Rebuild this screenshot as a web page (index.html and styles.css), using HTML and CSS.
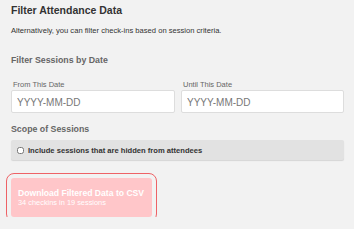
FILE: index.html
```html
<!DOCTYPE html>
<html lang="en">
<head>
<meta charset="UTF-8">
<title>Filter Attendance Data</title>
<link rel="stylesheet" href="styles.css">
</head>
<body>
    <div class="panel">
        <h2 class="title">Filter Attendance Data</h2>
        <p class="lead">Alternatively, you can filter check-ins based on session criteria.</p>

        <!-- date range -->
        <h3 class="section">Filter Sessions by Date</h3>
        <div class="dates">
            <label class="field">
                <span class="field-label">From This Date</span>
                <input class="date-input" type="text" placeholder="YYYY-MM-DD">
            </label>
            <label class="field">
                <span class="field-label">Until This Date</span>
                <input class="date-input" type="text" placeholder="YYYY-MM-DD">
            </label>
        </div>

        <!-- scope -->
        <h3 class="section scope-title">Scope of Sessions</h3>
        <label class="scope">
            <input class="scope-check" type="checkbox">
            <span>Include sessions that are hidden from attendees</span>
        </label>

        <button class="download" disabled>
            <span class="btn-title">Download Filtered Data to CSV</span>
            <span class="btn-sub">34 checkins in 19 sessions</span>
        </button>
    </div>
</body>
</html>
```

FILE: styles.css
```css
body {
    margin: 0;
    background: #f2f2f2;
    font-family: "Liberation Sans", Arial, sans-serif;
    color: #333;
}
.panel {
    padding: 4px 10px 0 11px;
}
.title {
    margin: 0;
    font-size: 10.5px;
    line-height: 12px;
    font-weight: bold;
    color: #333;
}
.lead {
    margin: 9.5px 0 0;
    font-size: 7.6px;
    line-height: 9px;
    color: #333;
}
.section {
    margin: 20px 0 0;
    font-size: 8.8px;
    line-height: 10px;
    font-weight: bold;
    color: #666;
}
.dates {
    display: grid;
    grid-template-columns: 164px 163px;
    gap: 6px;
    margin-top: 15px;
}
.field {
    display: flex;
    flex-direction: column;
}
.field-label {
    padding-left: 2px;
    font-size: 7.5px;
    line-height: 9px;
    color: #666;
}
.date-input {
    box-sizing: border-box;
    height: 23px;
    margin-top: 1.6px;
    padding: 1px 5px 0;
    border: 1px solid #ddd;
    border-radius: 2px;
    background: #fff;
    font-family: inherit;
    font-size: 10px;
    color: #333;
}
.date-input::placeholder {
    color: #777;
}
.scope-title {
    margin-top: 10.5px;
}
.scope {
    display: flex;
    align-items: center;
    gap: 4px;
    box-sizing: border-box;
    height: 20px;
    margin-top: 6.5px;
    padding-left: 6px;
    background: #e2e2e2;
    border-radius: 2px;
    box-shadow: 0 1px 1px rgba(0,0,0,0.12);
    font-size: 7.6px;
    font-weight: bold;
    color: #333;
}
.scope-check {
    width: 7px;
    height: 7px;
    margin: 0;
}
.download {
    display: flex;
    flex-direction: column;
    align-items: flex-start;
    width: 141px;
    margin-top: 18px;
    padding: 9.5px 7px 10px;
    border: none;
    border-radius: 3px;
    background: #ffc6c9;
    color: #fff;
    font-family: inherit;
    text-align: left;
    outline: 1.5px solid #ee6266;
    outline-offset: 4.5px;
}
.btn-title {
    font-size: 8.6px;
    line-height: 10px;
    font-weight: bold;
}
.btn-sub {
    font-size: 7.4px;
    line-height: 9px;
}
```
